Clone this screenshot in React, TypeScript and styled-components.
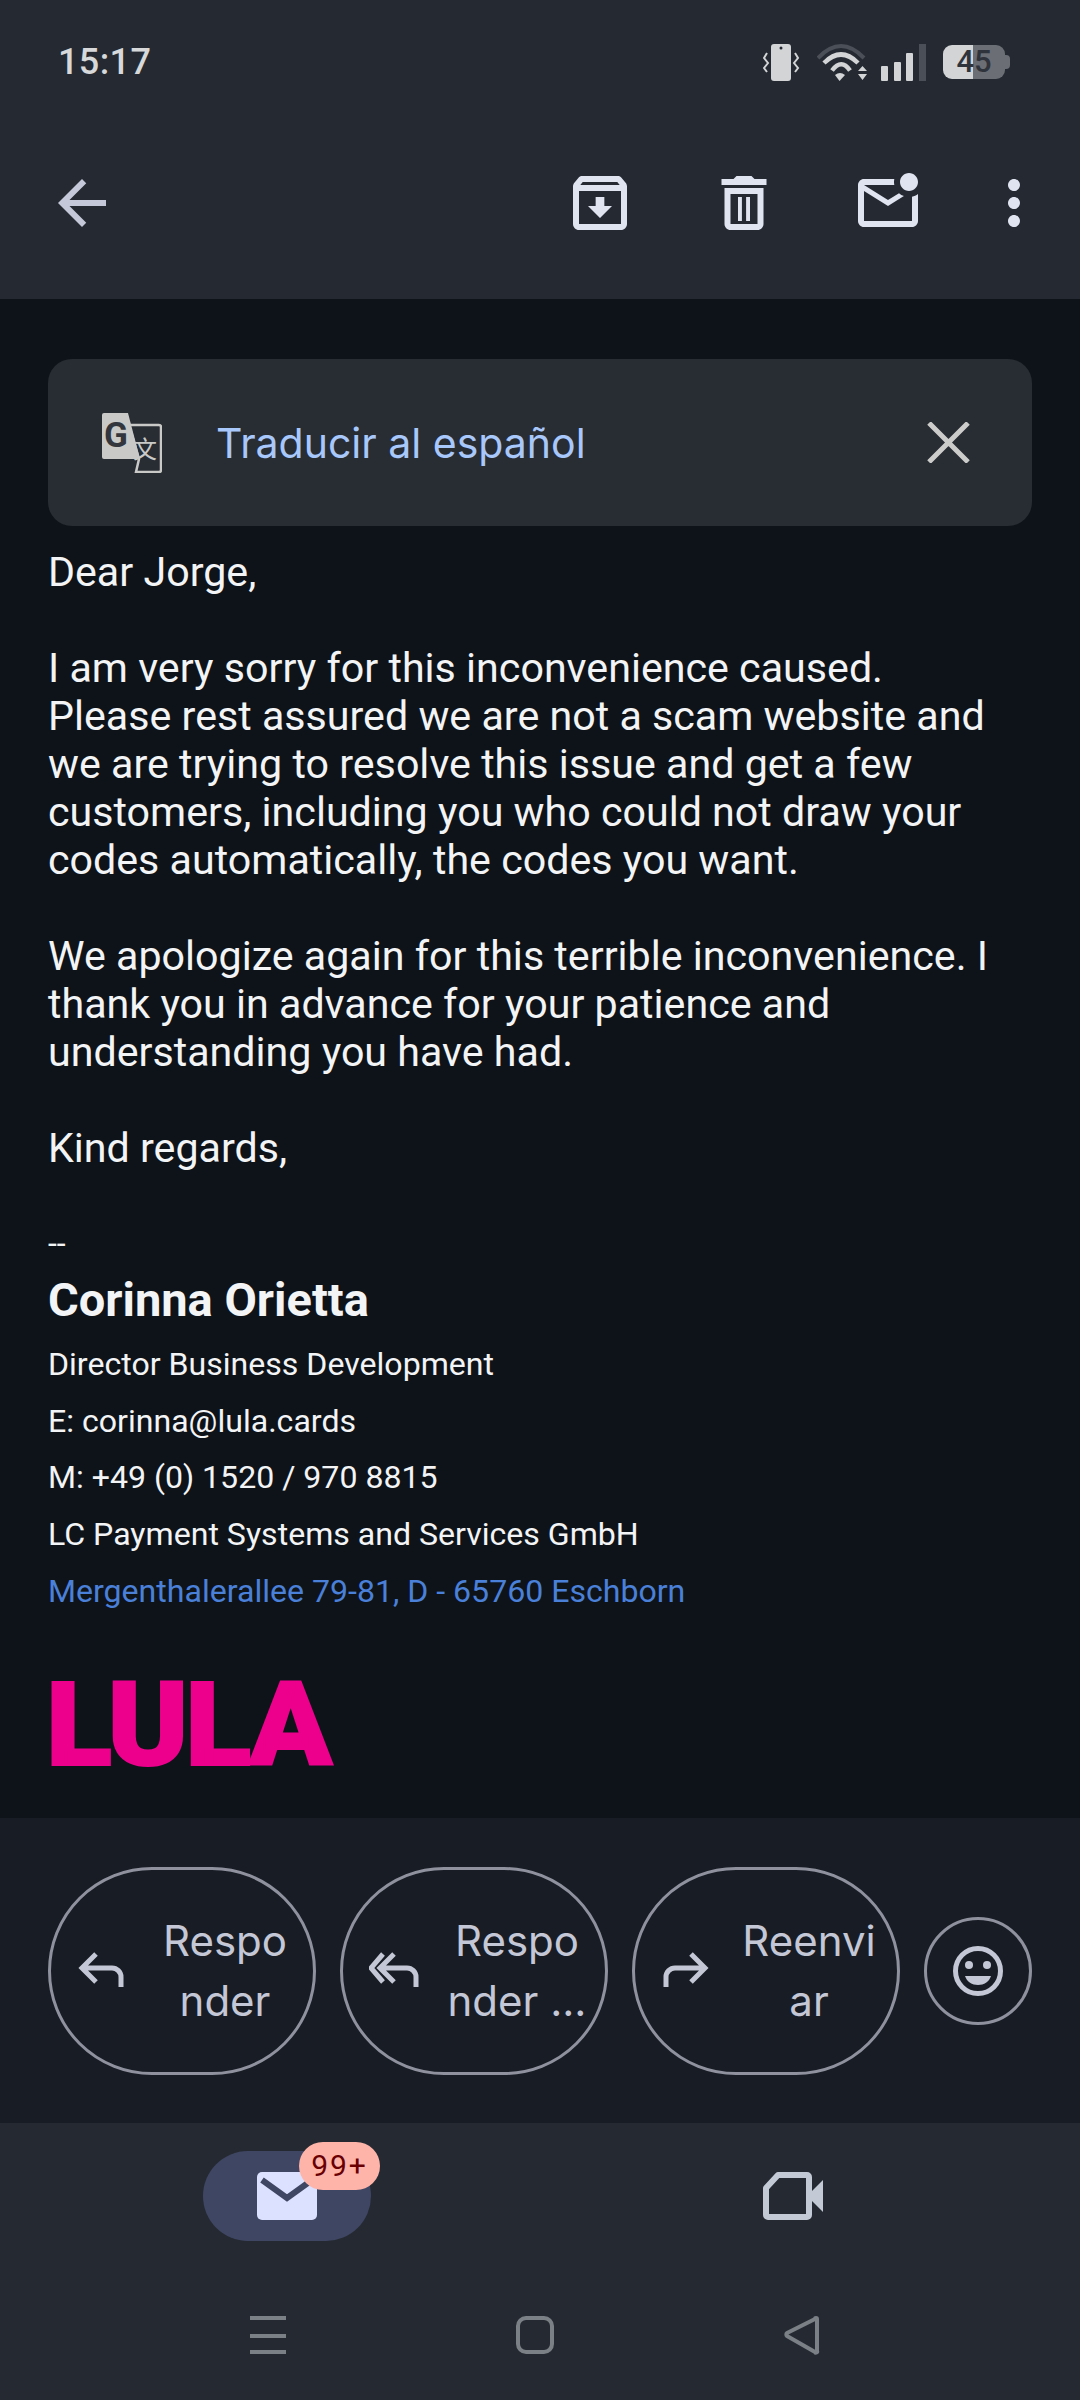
import React from "react";
import styled, { createGlobalStyle } from "styled-components";

const Global = createGlobalStyle`
  html, body { margin: 0; padding: 0; background: #0e131a; }
  * { box-sizing: border-box; }
`;

const Page = styled.div`
  width: 1080px;
  height: 2400px;
  display: flex;
  flex-direction: column;
  overflow: hidden;
  background: #0e131a;
  font-family: Roboto, "Liberation Sans", sans-serif;
`;

const Header = styled.header`
  height: 299px;
  background: #252a32;
`;

const StatusBar = styled.div`
  height: 122px;
  padding: 2px 70px 0 58px;
  display: flex;
  align-items: center;
  justify-content: space-between;
`;

const Time = styled.span`
  font-size: 36px;
  font-weight: 500;
  letter-spacing: 0.4px;
  color: #d6d8da;
`;

const StatusIcons = styled.div`
  display: flex;
  align-items: center;
  height: 37px;
`;

const Battery = styled.div`
  position: relative;
  width: 62px;
  height: 34px;
  margin-right: 5px;
  border-radius: 9px;
  background: linear-gradient(90deg, #d2d4d6 0 30px, #6b6e75 30px);
  color: #2f333b;
  font-size: 31px;
  font-weight: 500;
  line-height: 34px;
  text-align: center;
  &::after {
    content: "";
    position: absolute;
    right: -5px;
    top: 10px;
    width: 5px;
    height: 14px;
    border-radius: 0 4px 4px 0;
    background: #6b6e75;
  }
`;

const Toolbar = styled.div`
  padding: 45px 30px 0 46px;
  display: flex;
  align-items: center;
`;

const ToolIcon = styled.svg<{ $gap?: number; $dim?: boolean }>`
  width: 72px;
  height: 72px;
  flex: none;
  fill: ${(p) => (p.$dim ? "#c4c8d8" : "#e0e3f0")};
  margin-left: ${(p) => p.$gap ?? 0}px;
`;

const Spacer = styled.div`
  flex: 1;
`;

const Main = styled.main`
  flex: 1;
  min-height: 0;
  padding: 60px 48px 0;
  color: #f3f4f5;
`;

const Banner = styled.div`
  height: 167px;
  display: flex;
  align-items: center;
  padding: 0 62px 0 54px;
  margin-bottom: 22px;
  border-radius: 24px;
  background: #282c33;
`;

const BannerLabel = styled.span`
  flex: 1;
  margin-left: 54px;
  font-family: Inter, sans-serif;
  font-size: 41px;
  color: #a8c7fa;
`;

const Para = styled.p`
  margin: 0 0 48px;
  font-size: 41.2px;
  line-height: 48px;
`;

const Dashes = styled.div`
  font-size: 32px;
  line-height: 47px;
`;

const SignName = styled.div`
  font-size: 47px;
  font-weight: 700;
  line-height: 66px;
  margin-bottom: 3px;
`;

const SignLine = styled.div<{ $link?: boolean }>`
  font-size: 32.1px;
  line-height: 56.7px;
  color: ${(p) => (p.$link ? "#4a80d8" : "#f3f4f5")};
`;

const Logo = styled.div`
  margin: 55px 0 0 -2px;
  font-weight: 900;
  font-size: 116px;
  line-height: 100px;
  letter-spacing: -3px;
  color: #ec008c;
  -webkit-text-stroke: 2px #ec008c;
  transform: scaleX(1.05);
  transform-origin: left center;
`;

const Actions = styled.div`
  height: 305px;
  padding: 49px 48px 0;
  display: flex;
  align-items: flex-start;
  gap: 24px;
  background: #181d25;
`;

const ActionButton = styled.div`
  width: 268px;
  height: 208px;
  flex: none;
  display: flex;
  align-items: center;
  padding-left: 26px;
  border: 3px solid #8f929e;
  border-radius: 104px;
  color: #c4c7d5;
  font-family: Inter, sans-serif;
  font-size: 42px;
  line-height: 60px;
`;

const ActionIcon = styled.svg`
  width: 54px;
  height: 40px;
  flex: none;
  fill: none;
  stroke: #c4c7d5;
  stroke-width: 5;
`;

const ActionLabel = styled.span`
  flex: 1;
  text-align: center;
  padding-left: 6px;
`;

const EmojiButton = styled.div`
  width: 108px;
  height: 108px;
  margin-top: 50px;
  flex: none;
  display: flex;
  align-items: center;
  justify-content: center;
  border: 3px solid #8f929e;
  border-radius: 50%;
`;

const BottomNav = styled.nav`
  flex: none;
  height: 277px;
  background: #252a32;
`;

const Tabs = styled.div`
  padding: 28px 34px 0;
  display: grid;
  grid-template-columns: 1fr 1fr;
  justify-items: center;
  align-items: center;
`;

const MailPill = styled.div`
  position: relative;
  width: 168px;
  height: 90px;
  display: flex;
  align-items: center;
  justify-content: center;
  border-radius: 45px;
  background: #3f4663;
`;

const Badge = styled.span`
  position: absolute;
  left: 96px;
  top: -9px;
  width: 81px;
  height: 48px;
  border-radius: 24px;
  background: #ffb4a9;
  color: #680003;
  font-size: 30px;
  letter-spacing: 2px;
  line-height: 48px;
  text-align: center;
`;

const SystemNav = styled.div`
  padding: 75px 145px 0 134px;
  display: grid;
  grid-template-columns: repeat(3, 1fr);
  justify-items: center;
`;

const SysIcon = styled.svg`
  width: 40px;
  height: 40px;
  fill: none;
  stroke: #7b7f86;
  stroke-width: 4;
`;

export default function App() {
  return (
    <Page>
      <Global />
      <Header>
        <StatusBar>
          <Time>15:17</Time>
          <StatusIcons>
            <svg width="54" height="37" viewBox="0 0 54 37">
              <rect x="8" y="0" width="20" height="37" rx="3" fill="#d2d4d6" />
              <circle cx="18" cy="4" r="1.5" fill="#252a32" />
              <path d="M4 9L1 14l4 5-4 5 3 4M32 9l3 5-4 5 4 5-3 4" fill="none" stroke="#d2d4d6" strokeWidth="2" />
            </svg>
            <svg width="64" height="37" viewBox="0 0 64 37">
              <path d="M1 14Q24-10 47 14" fill="none" stroke="#4b4f57" strokeWidth="4" />
              <path d="M7 19Q24 2 41 19" fill="none" stroke="#d2d4d6" strokeWidth="4.5" />
              <path d="M15 26.5Q24.5 14 33 26.5" fill="none" stroke="#d2d4d6" strokeWidth="4.5" />
              <path d="M18 31L22.5 37 28 31Q23 27 18 31z" fill="#d2d4d6" />
              <path d="M41 27l4.5-5 4.5 5zM41 30h9l-4.5 6z" fill="#d2d4d6" />
            </svg>
            <svg width="62" height="37" viewBox="0 0 62 37">
              <rect x="0" y="22" width="7" height="15" rx="1" fill="#d2d4d6" />
              <rect x="13" y="18" width="7" height="19" rx="1" fill="#d2d4d6" />
              <rect x="25" y="9" width="7" height="28" rx="1" fill="#d2d4d6" />
              <rect x="38" y="0" width="7" height="37" fill="#4b4f57" />
            </svg>
            <Battery>45</Battery>
          </StatusIcons>
        </StatusBar>
        <Toolbar>
          <ToolIcon viewBox="0 0 24 24" $dim>
            <path d="M20 11H7.83l5.59-5.59L12 4l-8 8 8 8 1.41-1.41L7.83 13H20v-2z" />
          </ToolIcon>
          <Spacer />
          <ToolIcon viewBox="0 0 24 24">
            <path d="M20.54 5.23l-1.39-1.68C18.88 3.21 18.47 3 18 3H6c-.47 0-.88.21-1.16.55L3.46 5.23C3.17 5.57 3 6.02 3 6.5V19c0 1.1.9 2 2 2h14c1.1 0 2-.9 2-2V6.5c0-.48-.17-.93-.46-1.27zM6.24 5h11.52l.81.97H5.44l.8-.97zM5 19V8h14v11H5zm8.45-9h-2.9v3H8l4 4 4-4h-2.55z" />
          </ToolIcon>
          <ToolIcon viewBox="0 0 24 24" $gap={72}>
            <path d="M16.5 9v10h-9V9h9m-2-6h-5l-1 1H4.5v2h15V4H15.5l-1-1zM18.5 7h-13v12c0 1.1.9 2 2 2h9c1.1 0 2-.9 2-2V7zM10 10h1.3v8H10zM12.7 10H14v8h-1.3z" />
          </ToolIcon>
          <ToolIcon viewBox="0 0 24 24" $gap={72}>
            <path d="M22 8.98V18c0 1.1-.9 2-2 2H4c-1.1 0-2-.9-2-2V6c0-1.1.9-2 2-2h10.1c-.06.32-.1.66-.1 1s.04.68.1 1H4l8 5 3.67-2.29c.47.43 1.02.76 1.63.98L12 13 4 8v10h16V9.9c.74-.15 1.42-.48 2-.92zM16 5c0 1.66 1.34 3 3 3s3-1.34 3-3-1.34-3-3-3-3 1.34-3 3z" />
          </ToolIcon>
          <ToolIcon viewBox="0 0 24 24" $gap={54}>
            <path d="M12 8c1.1 0 2-.9 2-2s-.9-2-2-2-2 .9-2 2 .9 2 2 2zm0 2c-1.1 0-2 .9-2 2s.9 2 2 2 2-.9 2-2-.9-2-2-2zm0 6c-1.1 0-2 .9-2 2s.9 2 2 2 2-.9 2-2-.9-2-2-2z" />
          </ToolIcon>
        </Toolbar>
      </Header>

      <Main>
        <Banner>
          <svg width="60" height="60" viewBox="0 0 60 60">
            <path d="M27 12h30a2 2 0 0 1 2 2v43a2 2 0 0 1-2 2H34l3-13z" fill="#282c33" stroke="#c9cac8" strokeWidth="2.5" />
            <path d="M2 0h24l12 46H2a2 2 0 0 1-2-2V2a2 2 0 0 1 2-2z" fill="#c9cac8" />
            <text x="2" y="34" fontFamily="Roboto, sans-serif" fontWeight="700" fontSize="35" fill="#33363c">G</text>
            <text x="31" y="45" fontFamily="'Noto Sans CJK SC', sans-serif" fontSize="24" fill="#c9cac8">文</text>
          </svg>
          <BannerLabel>Traducir al español</BannerLabel>
          <svg width="43" height="41" viewBox="0 0 43 41">
            <path d="M2 1l39 39M41 1L2 40" stroke="#cccdcb" strokeWidth="5" fill="none" />
          </svg>
        </Banner>
        <Para>Dear Jorge,</Para>
        <Para>
          I am very sorry for this inconvenience caused.
          <br />
          Please rest assured we are not a scam website and we are trying to resolve this issue and get a few customers,
          including you who could not draw your codes automatically, the codes you want.
        </Para>
        <Para>
          We apologize again for this terrible inconvenience. I thank you in advance for your patience and understanding
          you have had.
        </Para>
        <Para>Kind regards,</Para>
        <Dashes>--</Dashes>
        <SignName>Corinna Orietta</SignName>
        <SignLine>Director Business Development</SignLine>
        <SignLine>E: corinna@lula.cards</SignLine>
        <SignLine>M: +49 (0) 1520 / 970 8815</SignLine>
        <SignLine>LC Payment Systems and Services GmbH</SignLine>
        <SignLine $link>Mergenthalerallee 79-81, D - 65760 Eschborn</SignLine>
        <Logo>LULA</Logo>
      </Main>

      <Actions>
        <ActionButton>
          <ActionIcon viewBox="0 0 54 40">
            <path d="M19 3L5 17l14 14M5 17h30a9 9 0 0 1 9 9v10" />
          </ActionIcon>
          <ActionLabel>
            Respo
            <br />
            nder
          </ActionLabel>
        </ActionButton>
        <ActionButton>
          <ActionIcon viewBox="0 0 54 40">
            <path d="M14 3L2 17l12 14M25 3L11 17l14 14M11 17h27a9 9 0 0 1 9 9v10" />
          </ActionIcon>
          <ActionLabel>
            Respo
            <br />
            nder ...
          </ActionLabel>
        </ActionButton>
        <ActionButton>
          <ActionIcon viewBox="0 0 54 40">
            <path d="M30 3l14 14-14 14M44 17H14a9 9 0 0 0-9 9v10" />
          </ActionIcon>
          <ActionLabel>
            Reenvi
            <br />
            ar
          </ActionLabel>
        </ActionButton>
        <EmojiButton>
          <svg width="50" height="50" viewBox="0 0 50 50">
            <circle cx="25" cy="25" r="22.5" fill="none" stroke="#c4c7d5" strokeWidth="5" />
            <circle cx="16" cy="19" r="4" fill="#c4c7d5" />
            <circle cx="34" cy="19" r="4" fill="#c4c7d5" />
            <path d="M12 30h26c-2 6-7 9-13 9s-11-3-13-9z" fill="#c4c7d5" />
          </svg>
        </EmojiButton>
      </Actions>

      <BottomNav>
        <Tabs>
          <MailPill>
            <svg width="60" height="48" viewBox="0 0 60 48">
              <rect width="60" height="48" rx="5" fill="#dce1ff" />
              <path d="M5 8l25 18L55 8" fill="none" stroke="#3f4663" strokeWidth="6" />
            </svg>
            <Badge>99+</Badge>
          </MailPill>
          <svg width="60" height="48" viewBox="0 0 60 48">
            <path d="M15 3h29a2 2 0 0 1 2 2v38a2 2 0 0 1-2 2H5a2 2 0 0 1-2-2V16z" fill="none" stroke="#c4c9d6" strokeWidth="6" strokeLinejoin="round" />
            <path d="M49 19l11-11v32L49 29z" fill="#c4c9d6" />
          </svg>
        </Tabs>
        <SystemNav>
          <SysIcon viewBox="0 0 40 40">
            <path d="M2 2h36M2 20h36M2 36h36" />
          </SysIcon>
          <SysIcon viewBox="0 0 40 40">
            <rect x="3" y="2" width="34" height="34" rx="8" />
          </SysIcon>
          <SysIcon viewBox="0 0 40 40">
            <path d="M35 3a1 1 0 0 0-2 0L5 17a2 2 0 0 0 0 3l28 16a1 1 0 0 0 2-1z" strokeLinejoin="round" />
          </SysIcon>
        </SystemNav>
      </BottomNav>
    </Page>
  );
}
